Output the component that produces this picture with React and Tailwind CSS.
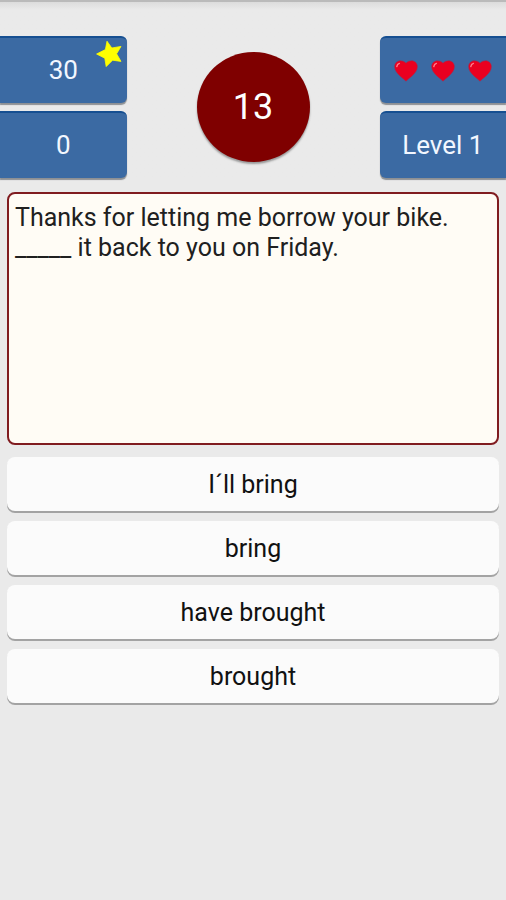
const ANSWERS = ["I\u00b4ll bring", "bring", "have brought", "brought"];

const TILE =
  "flex h-[67px] items-center justify-center border-t-2 border-[#164f91] bg-[#3b6aa3] text-[26px] text-[#f2f7ff] shadow-[0_2px_1px_#8d9094]";

function Star() {
  return (
    <svg className="absolute top-[2px] right-1 h-7 w-7" viewBox="0 0 28 28" aria-hidden="true">
      <path
        d="M12 1.2 L16.8 8 L26 6.4 L21.6 13.8 L26 21.4 L17.6 20.2 L11.2 26.6 L9.8 18.2 L1.6 14 L10.4 9.6 Z"
        fill="#ffff00"
        stroke="#ffff00"
        strokeWidth="0.8"
        strokeLinejoin="round"
      />
    </svg>
  );
}

function Heart() {
  return (
    <svg className="h-[22px] w-6" viewBox="0 0 24 22" aria-hidden="true">
      <path
        d="M12 21.2 C9 18.2 0.6 13.2 0.6 6.8 C0.6 3 3.2 0.8 6.4 0.8 C9 0.8 11 1.8 12 3.2 C13 1.8 15 0.8 17.6 0.8 C20.8 0.8 23.4 3 23.4 6.8 C23.4 13.2 15 18.2 12 21.2 Z"
        fill="#ea0020"
        stroke="#9b3155"
        strokeWidth="0.5"
      />
      <path d="M2.8 6.6 C3 5 4 3.8 5.4 3.4" fill="none" stroke="#ff7a8a" strokeWidth="1.4" strokeLinecap="round" />
    </svg>
  );
}

export default function App() {
  return (
    <main className="min-h-screen border-t-2 border-[#bababa] bg-[#eaeaea] font-['Roboto','Noto_Sans',sans-serif]">
      <header className="flex items-start justify-between bg-linear-to-b from-[#dcdcdc] to-[#eaeaea] to-[8px] pt-[34px]">
        <div className="flex w-1/4 flex-col gap-2">
          <div className={`${TILE} relative rounded-r-md`}>
            30
            <Star />
          </div>
          <div className={`${TILE} rounded-r-md`}>0</div>
        </div>
        <div className="mt-4 flex h-[110px] w-[113px] items-center justify-center rounded-[50%] bg-[#7f0000] text-[36px] text-white shadow-[0_2px_2px_#999999]">
          13
        </div>
        <div className="flex w-1/4 flex-col gap-2">
          <div className={`${TILE} gap-[13px] rounded-l-md`} role="img" aria-label="3 lives">
            <Heart />
            <Heart />
            <Heart />
          </div>
          <div className={`${TILE} rounded-l-md`}>Level 1</div>
        </div>
      </header>

      <section className="px-[7px] pt-[14px]">
        <p className="h-[253px] rounded-lg border-2 border-[#801c20] bg-[#fffcf5] px-[6px] pt-[9px] text-[25px] leading-[30px] text-[#202020]">
          Thanks for letting me borrow your bike. _____ it back to you on Friday.
        </p>
        <div className="mt-3 flex flex-col gap-[10px]">
          {ANSWERS.map((answer) => (
            <button
              key={answer}
              type="button"
              className="h-[54px] w-full rounded-lg bg-[#fbfbfb] pt-[2px] text-[25px] text-[#111111] shadow-[0_2px_0_#a3a3a3]"
            >
              {answer}
            </button>
          ))}
        </div>
      </section>
    </main>
  );
}
